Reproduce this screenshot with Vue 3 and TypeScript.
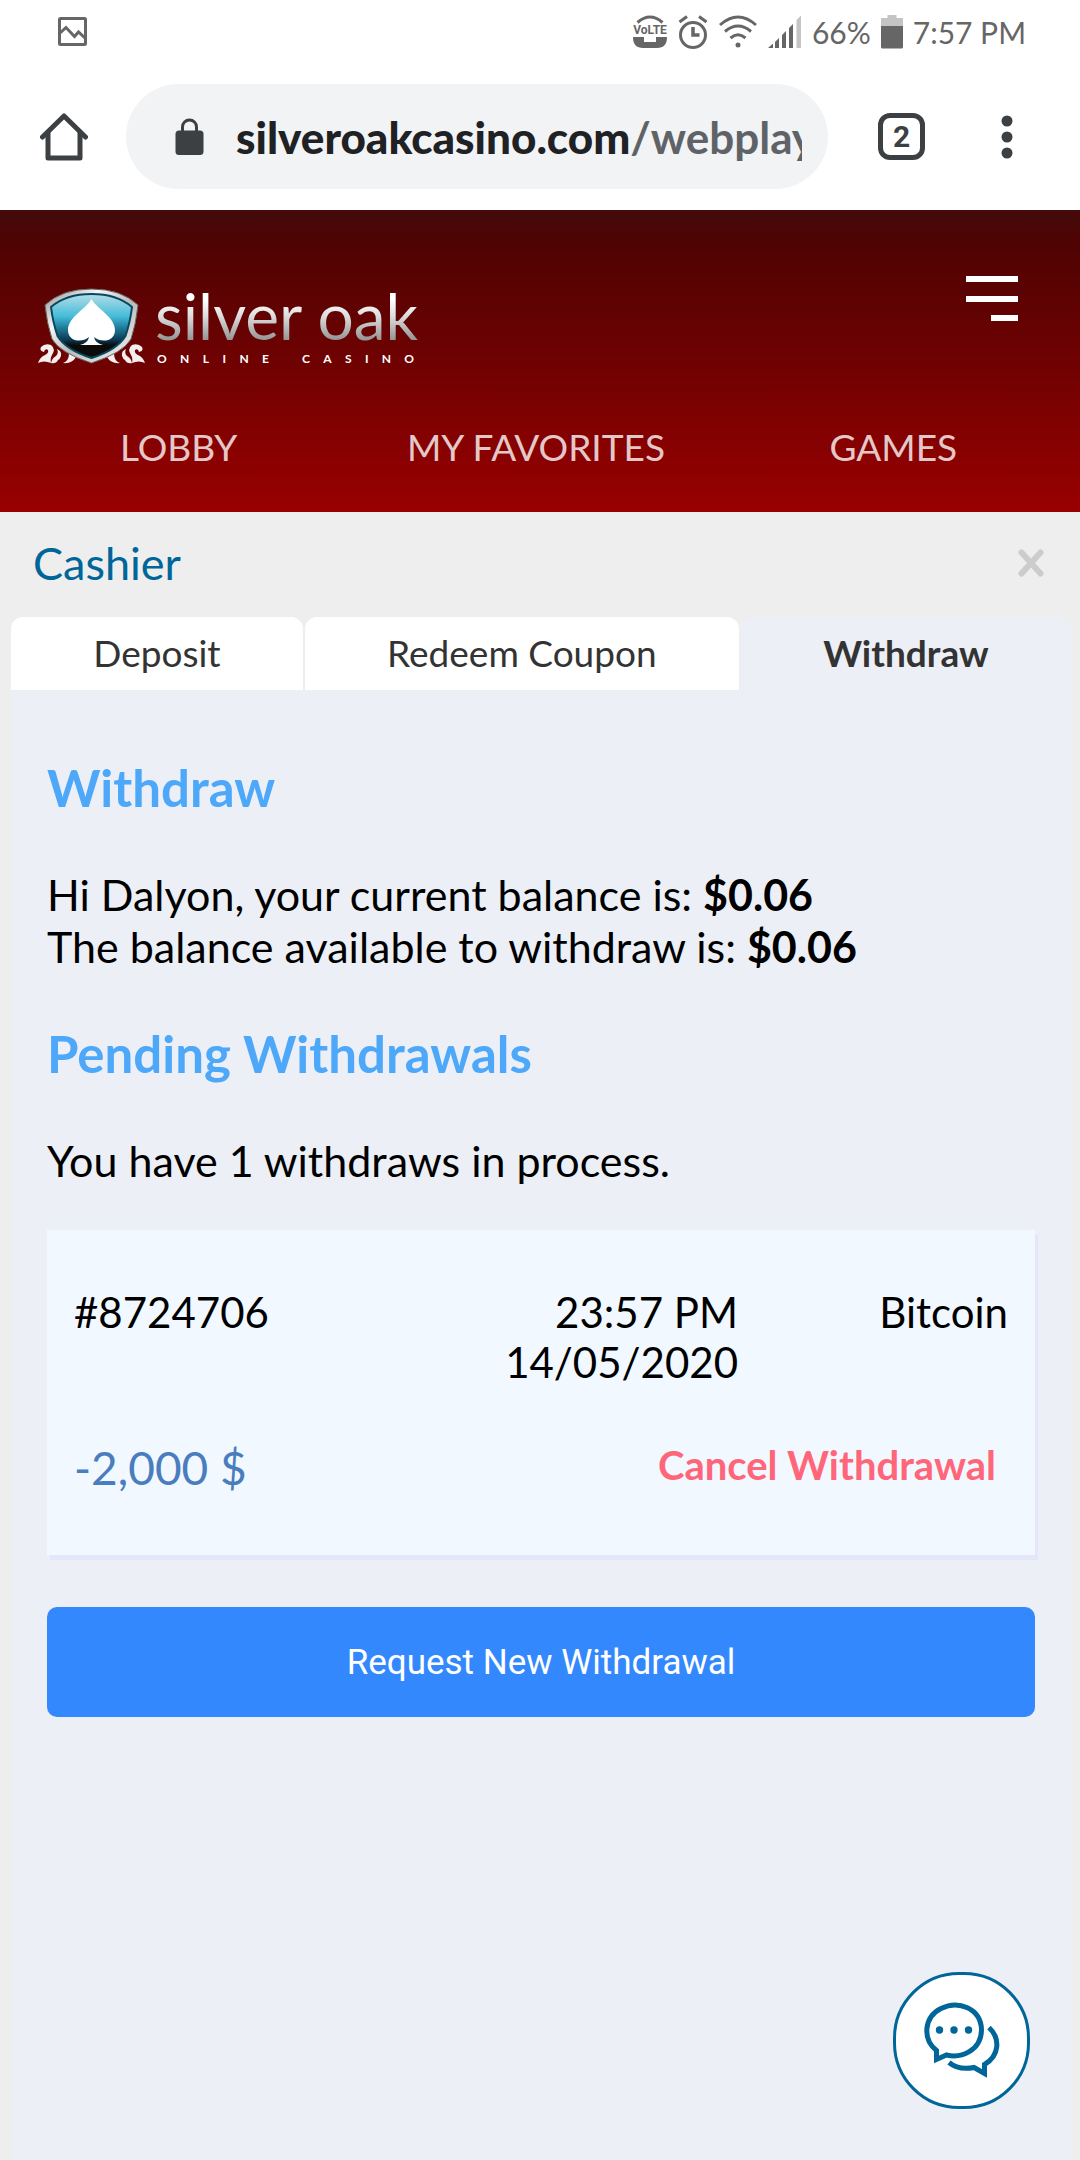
<script setup lang="ts">
interface Withdrawal {
  id: string
  time: string
  date: string
  method: string
  amount: string
}

const navItems: string[] = ['LOBBY', 'MY FAVORITES', 'GAMES']
const tabs: string[] = ['Deposit', 'Redeem Coupon', 'Withdraw']
const activeTab = 'Withdraw'
const balance = '$0.06'
const available = '$0.06'
const taglineWords: string[] = ['ONLINE', 'CASINO']
const pending: Withdrawal[] = [
  { id: '#8724706', time: '23:57 PM', date: '14/05/2020', method: 'Bitcoin', amount: '-2,000 $' },
]
</script>

<template>
  <div class="screen">
    <div class="status">
      <svg class="status-photo" width="29" height="29" viewBox="0 0 29 29" fill="none" stroke="#666" stroke-width="3">
        <rect x="1.5" y="1.5" width="26" height="26" rx="1" />
        <path d="M2 16 L8 10.5 L16.5 19.5 L20.5 15 L27 21" />
      </svg>
      <div class="status-right">
        <svg width="36" height="34" viewBox="0 0 36 34">
          <path d="M5.5 7.5 Q18 -3.5 30.5 7.5" fill="none" stroke="#666" stroke-width="3" />
          <text x="18" y="19" text-anchor="middle" font-family="Roboto, sans-serif" font-weight="700" font-size="12" fill="#666">VoLTE</text>
          <path d="M1 22 H12 V27 H24 V22 H35 Q35 33 25 33 H11 Q1 33 1 22Z" fill="#666" />
        </svg>
        <svg width="30" height="34" viewBox="0 0 30 34" fill="none" stroke="#666" stroke-width="3">
          <circle cx="15" cy="20" r="12.5" />
          <path d="M15 12 V20 H21.5" stroke-width="3.5" />
          <path d="M1.5 7 L9 1.5 M28.5 7 L21 1.5" />
        </svg>
        <svg width="40" height="34" viewBox="0 0 40 34" fill="none" stroke="#666" stroke-width="3">
          <path d="M2 10 Q20 -6 38 10" />
          <path d="M7 16.5 Q20 5.5 33 16.5" />
          <path d="M12.5 23 Q20 16.5 27.5 23" />
          <circle cx="20" cy="30" r="2.5" fill="#666" stroke="none" />
        </svg>
        <svg width="34" height="34" viewBox="0 0 34 34">
          <path d="M0 33 L5 28.5 V33Z M7 27 L11 23 V33 H7Z M14 20 L18 16 V33 H14Z M21 13 L25 9 V33 H21Z" fill="#666" />
          <path d="M28.5 5 L33 0.5 V33 H28.5Z" fill="#c4c4c4" />
        </svg>
        <span class="percent">66%</span>
        <svg width="22" height="34" viewBox="0 0 22 34">
          <path d="M6.5 0 H15.5 V3 H22 V11 H0 V3 H6.5Z" fill="#c4c4c4" />
          <path d="M0 11 H22 V32 Q22 33.5 20.5 33.5 H1.5 Q0 33.5 0 32Z" fill="#666" />
        </svg>
        <span class="clock">7:57 PM</span>
      </div>
    </div>

    <div class="toolbar">
      <button class="icon-button" aria-label="Home">
        <svg width="48" height="48" viewBox="0 0 48 48" fill="none" stroke="#3c4043" stroke-width="5" stroke-linecap="round" stroke-linejoin="round">
          <path d="M2.5 24 L24 3 L45.5 24" />
          <path d="M8 20 V45 H40 V20" />
        </svg>
      </button>
      <a class="address" href="#">
        <svg width="29" height="37" viewBox="0 0 29 37">
          <rect x="0.5" y="12.5" width="28" height="24.5" rx="3.5" fill="#3c4043" />
          <path d="M7.5 14 V9 A7 7 0 0 1 21.5 9 V14" fill="none" stroke="#3c4043" stroke-width="3" />
        </svg>
        <span class="url"><b>silveroakcasino.com</b>/webplay</span>
      </a>
      <button class="tab-count" aria-label="Open tabs">2</button>
      <button class="icon-button" aria-label="More">
        <svg width="12" height="44" viewBox="0 0 12 44" fill="#3c4043">
          <circle cx="6" cy="6" r="5.5" />
          <circle cx="6" cy="22" r="5.5" />
          <circle cx="6" cy="38" r="5.5" />
        </svg>
      </button>
    </div>

    <header class="header">
      <div class="header-top">
        <a class="logo" href="#" aria-label="Silver Oak Online Casino">
          <svg width="108" height="78" viewBox="0 0 108 78">
            <defs>
              <linearGradient id="shield" x1="0" y1="0" x2="0" y2="1">
                <stop offset="0" stop-color="#b5dde8" />
                <stop offset="0.35" stop-color="#45bcd8" />
                <stop offset="0.5" stop-color="#2585a5" />
                <stop offset="0.72" stop-color="#0b3850" />
                <stop offset="0.8" stop-color="#0c0c0c" />
              </linearGradient>
              <linearGradient id="rim" x1="0" y1="0" x2="1" y2="1">
                <stop offset="0" stop-color="#8d8d8d" />
                <stop offset="0.3" stop-color="#f6f6f6" />
                <stop offset="0.55" stop-color="#b9b9b9" />
                <stop offset="1" stop-color="#ffffff" />
              </linearGradient>
              <g id="scroll" fill="#f4eeee">
                <path d="M1 75 Q3 69 8 67 Q12 65 11 62 Q8 60 7 64 Q2 63 4 59 Q8 55 14 57 Q19 61 15 67 Q13 70 14 75 Q7 72 1 75Z" />
                <path d="M14 75 Q15 70 19 68 Q22 65 20 61 Q25 63 24 68 Q23 71 21 72 Q19 76 14 75Z" />
                <path d="M26 75 Q32 73 32 65 L39 69 Q35 76 26 75Z" />
              </g>
            </defs>
            <use href="#scroll" />
            <use href="#scroll" transform="matrix(-1 0 0 1 109 0)" />
            <path d="M54.5 1 Q84 1 101 17 Q99 36 94 51 Q86 65 54.5 75 Q23 65 15 51 Q10 36 8 17 Q25 1 54.5 1Z" fill="url(#rim)" stroke="#666" stroke-width="1" />
            <path d="M54.500 6 Q80 6 95 19 Q93 35 88.500 48 Q80 62 54.500 70 Q29 62 20.500 48 Q16 35 14 19 Q29 6 54.500 6Z" fill="url(#shield)" stroke="#07485f" stroke-width="2" />
            <path d="M54.5 11 C60 21 78 29 78 42 C78 54 64 55 57 49 Q58 55 66 57 H43 Q51 55 52 49 C45 55 31 54 31 42 C31 29 49 21 54.5 11Z" fill="#fff" />
          </svg>
          <span class="wordmark">
            <span class="brand">silver oak</span>
            <span class="tagline">
              <span v-for="word in taglineWords" :key="word" class="tagline-word">
                <span v-for="(letter, i) in word" :key="i">{{ letter }}</span>
              </span>
            </span>
          </span>
        </a>
        <button class="menu" aria-label="Menu">
          <svg width="52" height="46" viewBox="0 0 52 46" fill="#fff">
            <rect width="52" height="6" />
            <rect y="20" width="52" height="6" />
            <rect x="25" y="39" width="27" height="6" />
          </svg>
        </button>
      </div>
      <nav class="nav">
        <a v-for="item in navItems" :key="item" href="#">{{ item }}</a>
      </nav>
    </header>

    <main class="cashier">
      <div class="title-row">
        <h1>Cashier</h1>
        <button class="icon-button" aria-label="Close">
          <svg width="26" height="28" viewBox="0 0 26 28" stroke="#ccc" stroke-width="6" stroke-linecap="round">
            <path d="M3.5 3.5 L22.5 24.5 M22.5 3.5 L3.5 24.5" />
          </svg>
        </button>
      </div>
      <div class="tabs" role="tablist">
        <button
          v-for="tab in tabs"
          :key="tab"
          class="tab"
          :class="{ active: tab === activeTab }"
          role="tab"
          :aria-selected="tab === activeTab"
        >{{ tab }}</button>
      </div>
      <section class="panel">
        <h2>Withdraw</h2>
        <p>
          Hi Dalyon, your current balance is: <b>{{ balance }}</b><br />
          The balance available to withdraw is: <b>{{ available }}</b>
        </p>
        <h2>Pending Withdrawals</h2>
        <p>You have {{ pending.length }} withdraws in process.</p>
        <article v-for="item in pending" :key="item.id" class="card">
          <div class="card-info">
            <span>{{ item.id }}</span>
            <span class="end">{{ item.time }}<br />{{ item.date }}</span>
            <span class="end">{{ item.method }}</span>
          </div>
          <div class="card-foot">
            <span class="amount">{{ item.amount }}</span>
            <button class="cancel">Cancel Withdrawal</button>
          </div>
        </article>
        <button class="request">Request New Withdrawal</button>
      </section>
    </main>

    <button class="chat" aria-label="Live chat">
      <svg width="76" height="78" viewBox="0 0 76 78" fill="none" stroke="#069" stroke-width="5">
        <path d="M12.5 57.5 V48.5 C-2 37 0 15 17 6.5 C34 -2 57 6 57.5 28 C57 49 37 56.5 22.5 53 Z" />
        <path d="M65 25.5 C77 37 75 54 60.5 62.5 V71.5 L50 65.5 C40 67.5 31 65.5 25 60.5" />
        <g fill="#069" stroke="none">
          <circle cx="15.5" cy="28" r="3.7" />
          <circle cx="30" cy="28" r="3.7" />
          <circle cx="44.5" cy="28" r="3.7" />
        </g>
      </svg>
    </button>
  </div>
</template>

<style>
body {
  margin: 0;
  background: #eee;
}
</style>

<style scoped>
.screen {
  display: flex;
  flex-direction: column;
  min-height: 100vh;
  background: #eee;
  font-family: Lato, "Liberation Sans", sans-serif;
}
button {
  padding: 0;
  border: 0;
  background: none;
  font-family: inherit;
  cursor: pointer;
}
a {
  text-decoration: none;
}
svg {
  display: block;
  flex: none;
}
h1,
h2,
p {
  margin: 0;
}

.status {
  display: flex;
  align-items: center;
  justify-content: space-between;
  height: 63px;
  padding: 0 54px 0 58px;
  background: #fff;
  color: #666;
}
.status-right {
  display: flex;
  align-items: center;
  gap: 10px;
}
.percent,
.clock {
  font-size: 30px;
  line-height: 36px;
  white-space: nowrap;
}

.toolbar {
  display: flex;
  align-items: center;
  height: 147px;
  padding: 0 67px 0 40px;
  background: #fff;
}
.address {
  display: flex;
  flex: 1;
  align-items: center;
  gap: 32px;
  min-width: 0;
  height: 105px;
  margin: 0 50px 0 38px;
  padding: 0 26px 0 49px;
  box-sizing: border-box;
  border-radius: 53px;
  background: #f1f3f4;
}
.url {
  overflow: hidden;
  color: #5f6368;
  font-size: 44px;
  font-weight: 700;
  line-height: 52px;
  white-space: nowrap;
}
.url b {
  color: #202124;
}
.tab-count {
  width: 47px;
  height: 47px;
  margin-right: 76px;
  border: 5px solid #3c4043;
  border-radius: 12px;
  color: #3c4043;
  font-family: Roboto, sans-serif;
  font-size: 30px;
  font-weight: 700;
  line-height: 36px;
}

.header {
  padding: 62px 8px 43px 0;
  background: linear-gradient(#430a0a, #4e0303 10%, #900 100%);
}
.header-top {
  display: flex;
  align-items: flex-start;
  justify-content: space-between;
  height: 153px;
  padding: 0 54px 0 37px;
}
.logo {
  display: flex;
  gap: 10px;
  margin-top: 16px;
}
.wordmark {
  display: flex;
  flex-direction: column;
  gap: 8px;
}
.brand {
  background: linear-gradient(#fff 20%, #ddd 50%, #888 100%);
  background-clip: text;
  color: transparent;
  font-size: 64px;
  line-height: 56px;
}
.tagline {
  display: flex;
  justify-content: space-between;
  padding: 0 4px 0 2px;
  color: #fff;
  font-size: 12px;
  font-weight: 700;
  line-height: 14px;
}
.tagline-word {
  display: flex;
  justify-content: space-between;
  width: 112px;
}
.menu {
  margin-top: 4px;
}
.nav {
  display: grid;
  grid-template-columns: repeat(3, 1fr);
  text-align: center;
}
.nav a {
  color: rgba(255, 255, 255, 0.8);
  font-size: 37px;
  line-height: 44px;
}

.cashier {
  display: flex;
  flex: 1;
  flex-direction: column;
  padding: 0 9px 0 11px;
}
.title-row {
  display: flex;
  align-items: center;
  justify-content: space-between;
  padding: 25px 27px 28px 22px;
}
h1 {
  color: #069;
  font-size: 45px;
  font-weight: 400;
  line-height: 52px;
}
.tabs {
  display: flex;
  gap: 2px;
}
.tab {
  flex: 1 1 auto;
  padding: 14px 0 15px;
  border-radius: 12px 12px 0 0;
  background: #fff;
  color: #333;
  font-size: 37px;
  line-height: 44px;
}
.tab.active {
  background: #eceff5;
  font-weight: 700;
}
.panel {
  flex: 1;
  padding: 68px 36px;
  background: #eceff5;
}
h2 {
  margin-bottom: 51px;
  color: #4da8fa;
  font-size: 51px;
  font-weight: 700;
  line-height: 60px;
}
p {
  margin-bottom: 51px;
  color: #000;
  font-size: 43px;
  line-height: 52px;
}
.card {
  margin: -8px 0 52px;
  padding: 57px 27px 59px;
  background: #f1f8ff;
  box-shadow: 3px 5px #e6e6fa;
}
.card-info {
  display: grid;
  grid-template-columns: 1fr 1fr 270px;
  margin-bottom: 53px;
  font-size: 42px;
  line-height: 50px;
}
.end {
  text-align: right;
}
.card-foot {
  display: flex;
  align-items: flex-start;
  justify-content: space-between;
}
.amount {
  color: #4a7dbd;
  font-size: 46px;
  line-height: 56px;
}
.cancel {
  padding-right: 12px;
  color: #ff667a;
  font-size: 40px;
  font-weight: 700;
  line-height: 50px;
}
.request {
  width: 100%;
  height: 110px;
  border-radius: 10px;
  background: #3388fd;
  color: #fff;
  font-family: Roboto, sans-serif;
  font-size: 35px;
}
.chat {
  position: fixed;
  right: 50px;
  bottom: 51px;
  display: flex;
  align-items: center;
  justify-content: center;
  width: 137px;
  height: 137px;
  border: 3px solid #069;
  border-radius: 66px;
  background: #fff;
}
</style>
